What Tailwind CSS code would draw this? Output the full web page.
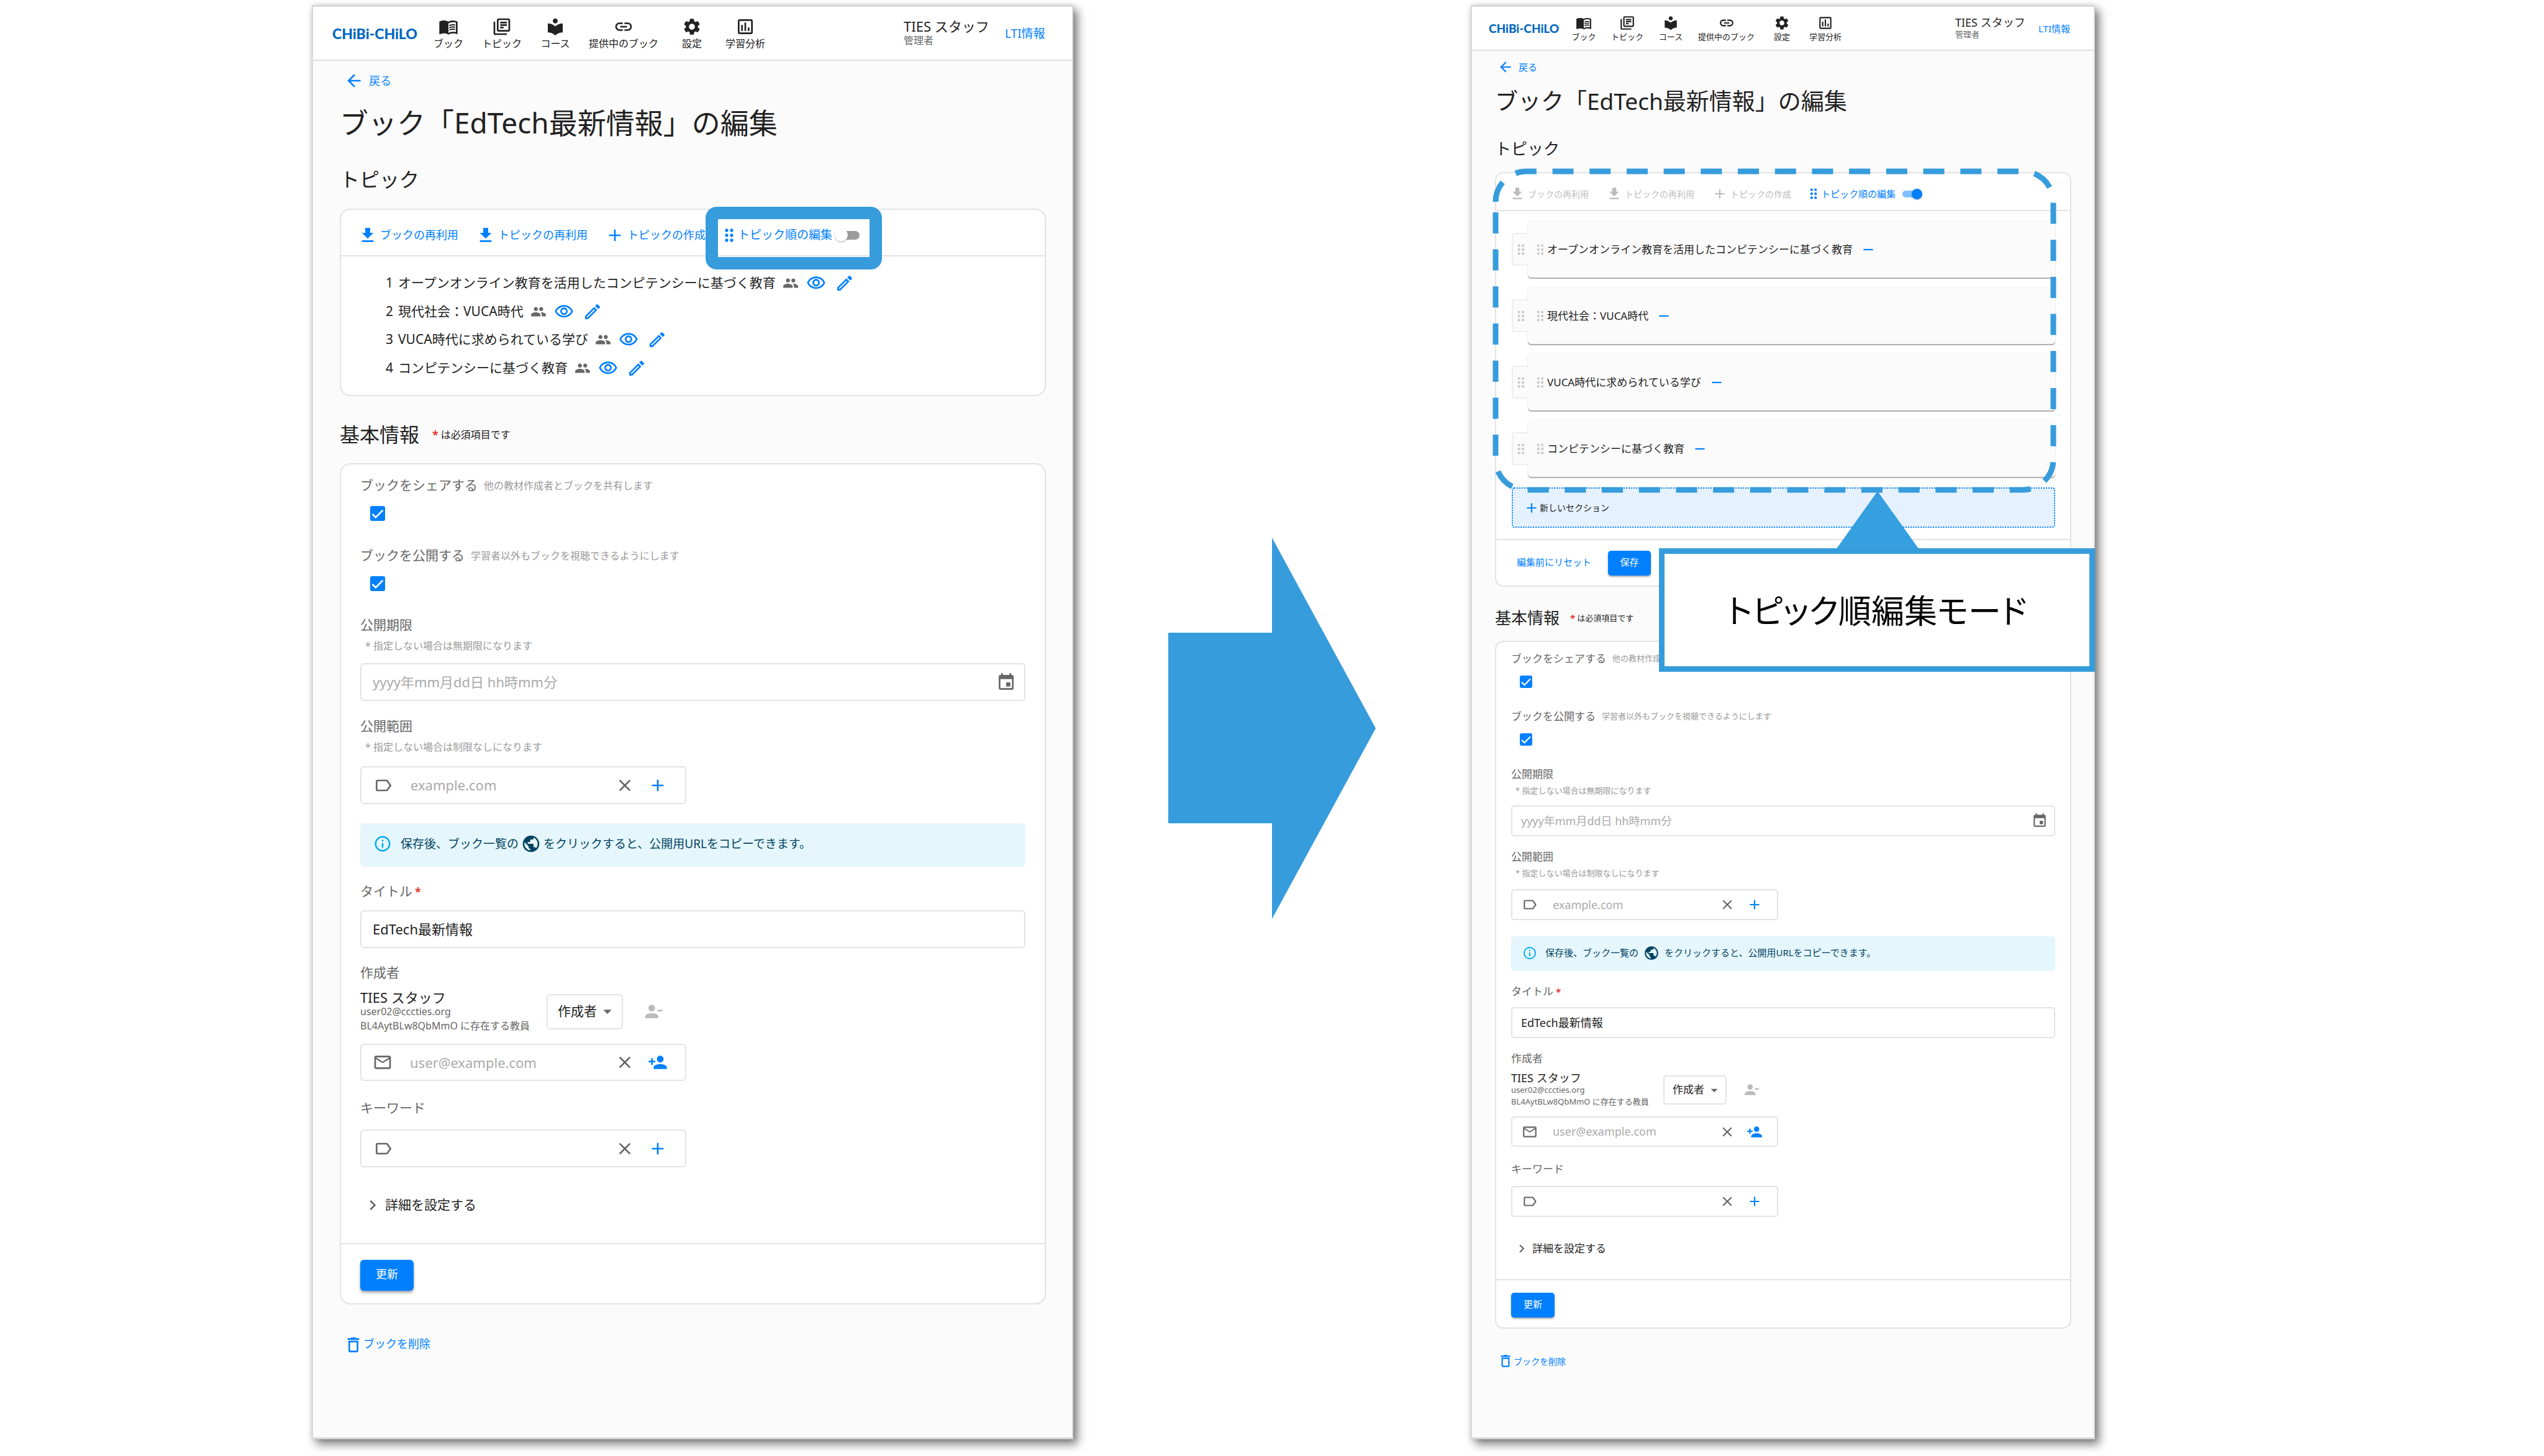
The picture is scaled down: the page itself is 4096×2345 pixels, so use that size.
<!DOCTYPE html>
<html lang="ja">
<head>
<meta charset="utf-8">
<title>ブックの編集 - トピック順編集モード</title>
<script src="https://cdn.jsdelivr.net/npm/@tailwindcss/browser@4"></script>
</head>
<body class="bg-white text-[#222] whitespace-nowrap font-['Noto_Sans','Noto_Sans_CJK_JP',sans-serif] [&_svg]:shrink-0 [&_svg]:fill-current">

<!-- shared icon set -->
<svg class="hidden" aria-hidden="true">
  <symbol id="book" viewBox="0 0 24 24"><path d="M21 5c-1.11-.35-2.33-.5-3.5-.5-1.95 0-4.05.4-5.5 1.5-1.45-1.1-3.55-1.5-5.5-1.5S2.45 4.9 1 6v14.65c0 .25.25.5.5.5.1 0 .15-.05.25-.05C3.1 20.45 5.05 20 6.5 20c1.95 0 4.05.4 5.5 1.5 1.35-.85 3.8-1.5 5.5-1.5 1.65 0 3.35.3 4.75 1.05.1.05.15.05.25.05.25 0 .5-.25.5-.5V6c-.6-.45-1.25-.75-2-1zm0 13.5c-1.1-.35-2.3-.5-3.5-.5-1.7 0-4.15.65-5.5 1.5V8c1.35-.85 3.8-1.5 5.5-1.5 1.2 0 2.4.15 3.5.5v11.5z"/><path d="M17.5 10.5c.88 0 1.73.09 2.5.26V9.24c-.79-.15-1.64-.24-2.5-.24-1.7 0-3.24.29-4.5.83v1.66c1.13-.64 2.7-.99 4.5-.99zM13 12.49v1.66c1.13-.64 2.7-.99 4.5-.99.88 0 1.73.09 2.5.26V11.9c-.79-.15-1.64-.24-2.5-.24-1.7 0-3.24.3-4.5.83zM17.5 14.33c-1.7 0-3.24.29-4.5.83v1.66c1.13-.64 2.7-.99 4.5-.99.88 0 1.73.09 2.5.26v-1.52c-.79-.16-1.64-.24-2.5-.24z"/></symbol>
  <symbol id="topics" viewBox="0 0 24 24"><path d="M4 6H2v14c0 1.1.9 2 2 2h14v-2H4V6zm16-4H8c-1.1 0-2 .9-2 2v12c0 1.1.9 2 2 2h12c1.1 0 2-.9 2-2V4c0-1.1-.9-2-2-2zm0 14H8V4h12v12zM10 9h8v2h-8zm0 3h4v2h-4zm0-6h8v2h-8z"/></symbol>
  <symbol id="course" viewBox="0 0 24 24"><path d="M12 11.55C9.64 9.35 6.48 8 3 8v11c3.48 0 6.64 1.35 9 3.55 2.36-2.19 5.52-3.55 9-3.55V8c-3.48 0-6.64 1.35-9 3.55zM12 8c1.66 0 3-1.34 3-3s-1.34-3-3-3-3 1.34-3 3 1.34 3 3 3z"/></symbol>
  <symbol id="link" viewBox="0 0 24 24"><path d="M3.9 12c0-1.71 1.39-3.1 3.1-3.1h4V7H7c-2.76 0-5 2.24-5 5s2.24 5 5 5h4v-1.9H7c-1.71 0-3.1-1.39-3.1-3.1zM8 13h8v-2H8v2zm9-6h-4v1.9h4c1.71 0 3.1 1.39 3.1 3.1s-1.39 3.1-3.1 3.1h-4V17h4c2.76 0 5-2.24 5-5s-2.24-5-5-5z"/></symbol>
  <symbol id="gear" viewBox="0 0 24 24"><path d="M19.14 12.94c.04-.3.06-.61.06-.94 0-.32-.02-.64-.07-.94l2.03-1.58c.18-.14.23-.41.12-.61l-1.92-3.32c-.12-.22-.37-.29-.59-.22l-2.39.96c-.5-.38-1.03-.7-1.62-.94l-.36-2.54c-.04-.24-.24-.41-.48-.41h-3.84c-.24 0-.43.17-.47.41l-.36 2.54c-.59.24-1.13.57-1.62.94l-2.39-.96c-.22-.08-.47 0-.59.22L2.74 8.87c-.12.21-.08.47.12.61l2.03 1.58c-.05.3-.09.63-.09.94s.02.64.07.94l-2.03 1.58c-.18.14-.23.41-.12.61l1.92 3.32c.12.22.37.29.59.22l2.39-.96c.5.38 1.03.7 1.62.94l.36 2.54c.05.24.24.41.48.41h3.84c.24 0 .44-.17.47-.41l.36-2.54c.59-.24 1.13-.56 1.62-.94l2.39.96c.22.08.47 0 .59-.22l1.92-3.32c.12-.22.07-.47-.12-.61l-2.01-1.58zM12 15.6c-1.98 0-3.6-1.62-3.6-3.6s1.62-3.6 3.6-3.6 3.6 1.62 3.6 3.6-1.62 3.6-3.6 3.6z"/></symbol>
  <symbol id="chart" viewBox="0 0 24 24"><path d="M19 3H5c-1.1 0-2 .9-2 2v14c0 1.1.9 2 2 2h14c1.1 0 2-.9 2-2V5c0-1.1-.9-2-2-2zm0 16H5V5h14v14zM7 10h2v7H7zM11 7h2v10h-2zM15 13h2v4h-2z"/></symbol>
  <symbol id="back" viewBox="0 0 24 24"><path d="M20 11H7.83l5.59-5.59L12 4l-8 8 8 8 1.41-1.41L7.83 13H20v-2z"/></symbol>
  <symbol id="download" viewBox="0 0 24 24"><path d="M19 9h-4V3H9v6H5l7 7 7-7zM5 18v2h14v-2H5z"/></symbol>
  <symbol id="add" viewBox="0 0 24 24"><path d="M19 13h-6v6h-2v-6H5v-2h6V5h2v6h6v2z"/></symbol>
  <symbol id="remove" viewBox="0 0 24 24"><path d="M19 13H5v-2h14v2z"/></symbol>
  <symbol id="close" viewBox="0 0 24 24"><path d="M19 6.41L17.59 5 12 10.59 6.41 5 5 6.41 10.59 12 5 17.59 6.41 19 12 13.41 17.59 19 19 17.59 13.41 12z"/></symbol>
  <symbol id="drag" viewBox="4.5 0 15 24"><path d="M11 18c0 1.1-.9 2-2 2s-2-.9-2-2 .9-2 2-2 2 .9 2 2zm-2-8c-1.1 0-2 .9-2 2s.9 2 2 2 2-.9 2-2-.9-2-2-2zm0-6c-1.1 0-2 .9-2 2s.9 2 2 2 2-.9 2-2-.9-2-2-2zm6 4c1.1 0 2-.9 2-2s-.9-2-2-2-2 .9-2 2 .9 2 2 2zm0 2c-1.1 0-2 .9-2 2s.9 2 2 2 2-.9 2-2-.9-2-2-2zm0 6c-1.1 0-2 .9-2 2s.9 2 2 2 2-.9 2-2-.9-2-2-2z"/></symbol>
  <symbol id="people" viewBox="0 0 24 24"><path d="M16 11c1.66 0 2.99-1.34 2.99-3S17.66 5 16 5c-1.66 0-3 1.34-3 3s1.34 3 3 3zm-8 0c1.66 0 2.99-1.34 2.99-3S9.66 5 8 5C6.34 5 5 6.34 5 8s1.34 3 3 3zm0 2c-2.33 0-7 1.17-7 3.5V19h14v-2.5c0-2.33-4.67-3.5-7-3.5zm8 0c-.29 0-.62.02-.97.05 1.16.84 1.97 1.97 1.97 3.45V19h6v-2.5c0-2.33-4.67-3.5-7-3.5z"/></symbol>
  <symbol id="eye" viewBox="0 0 24 24"><path d="M12 6c3.79 0 7.17 2.13 8.82 5.5C19.17 14.87 15.79 17 12 17s-7.17-2.13-8.82-5.5C4.83 8.13 8.21 6 12 6m0-2C7 4 2.73 7.11 1 11.5 2.73 15.89 7 19 12 19s9.27-3.11 11-7.5C21.27 7.11 17 4 12 4zm0 5c1.38 0 2.5 1.12 2.5 2.5S13.38 14 12 14s-2.5-1.12-2.5-2.5S10.62 9 12 9m0-2c-2.48 0-4.5 2.02-4.5 4.5S9.52 16 12 16s4.5-2.02 4.5-4.5S14.48 7 12 7z"/></symbol>
  <symbol id="edit" viewBox="0 0 24 24"><path d="M14.06 9.02l.92.92L5.92 19H5v-.92l9.06-9.06M17.66 3c-.25 0-.51.1-.7.29l-1.83 1.83 3.75 3.75 1.83-1.83c.39-.39.39-1.02 0-1.41l-2.34-2.34c-.2-.2-.45-.29-.71-.29zm-3.6 3.19L3 17.25V21h3.75L17.81 9.94l-3.75-3.75z"/></symbol>
  <symbol id="calendar" viewBox="0 0 24 24"><path d="M17 12h-5v5h5v-5zM16 1v2H8V1H6v2H5c-1.11 0-1.99.9-1.99 2L3 19c0 1.1.89 2 2 2h14c1.1 0 2-.9 2-2V5c0-1.1-.9-2-2-2h-1V1h-2zm3 18H5V8h14v11z"/></symbol>
  <symbol id="label" viewBox="0 0 24 24"><path d="M17.63 5.84C17.27 5.33 16.67 5 16 5L5 5.01C3.9 5.01 3 5.9 3 7v10c0 1.1.9 1.99 2 1.99L16 19c.67 0 1.27-.33 1.63-.84L22 12l-4.37-6.16zM16 17H5V7h11l3.55 5L16 17z"/></symbol>
  <symbol id="mail" viewBox="0 0 24 24"><path d="M20 4H4c-1.1 0-1.99.9-1.99 2L2 18c0 1.1.9 2 2 2h16c1.1 0 2-.9 2-2V6c0-1.1-.9-2-2-2zm0 14H4V8l8 5 8-5v10zm-8-7L4 6h16l-8 5z"/></symbol>
  <symbol id="person-add" viewBox="0 0 24 24"><path d="M15 12c2.21 0 4-1.79 4-4s-1.79-4-4-4-4 1.79-4 4 1.79 4 4 4zm-9-2V7H4v3H1v2h3v3h2v-3h3v-2H6zm9 4c-2.67 0-8 1.34-8 4v2h16v-2c0-2.66-5.33-4-8-4z"/></symbol>
  <symbol id="person-remove" viewBox="0 0 24 24"><path d="M14 8c0-2.21-1.79-4-4-4S6 5.79 6 8s1.79 4 4 4 4-1.79 4-4zm3 2v2h6v-2h-6zM2 18v2h16v-2c0-2.66-5.33-4-8-4s-8 1.34-8 4z"/></symbol>
  <symbol id="info" viewBox="0 0 24 24"><path d="M11,9H13V7H11M12,20C7.59,20 4,16.41 4,12C4,7.59 7.59,4 12,4C16.41,4 20,7.59 20,12C20,16.41 16.41,20 12,20M12,2A10,10 0 0,0 2,12A10,10 0 0,0 12,22A10,10 0 0,0 22,12A10,10 0 0,0 12,2M11,17H13V11H11V17Z"/></symbol>
  <symbol id="globe" viewBox="0 0 24 24"><path d="M12 2C6.48 2 2 6.48 2 12s4.48 10 10 10 10-4.48 10-10S17.52 2 12 2zm-1 17.93c-3.95-.49-7-3.85-7-7.93 0-.62.08-1.21.21-1.79L9 15v1c0 1.1.9 2 2 2v1.93zm6.9-2.54c-.26-.81-1-1.39-1.9-1.39h-1v-3c0-.55-.45-1-1-1H8v-2h2c.55 0 1-.45 1-1V7h2c1.1 0 2-.9 2-2v-.41c2.93 1.19 5 4.06 5 7.41 0 2.08-.8 3.97-2.1 5.39z"/></symbol>
  <symbol id="chevron" viewBox="0 0 24 24"><path d="M10 6L8.59 7.41 13.17 12l-4.58 4.59L10 18l6-6z"/></symbol>
  <symbol id="caret" viewBox="0 0 24 24"><path d="M7 10l5 5 5-5z"/></symbol>
  <symbol id="trash" viewBox="0 0 24 24"><path d="M6 19c0 1.1.9 2 2 2h8c1.1 0 2-.9 2-2V7H6v12zM8 9h8v10H8V9zm7.5-5l-1-1h-5l-1 1H5v2h14V4h-3.5z"/></symbol>
  <symbol id="tick" viewBox="0 0 18 18"><path fill="none" stroke="#fff" stroke-width="2" d="M2.7 9.7l4 4L15.3 5"/></symbol>
</svg>

<main class="grid grid-cols-[502fr_1226fr_640fr_1005fr_723fr] items-start">

  <!-- normal mode -->
  <section class="col-start-2 mt-2 mb-[27px] border-x-2 border-y-[3px] border-[#d9d9d9] bg-[#fbfbfb] shadow-[7px_8px_14px_rgba(0,0,0,0.5),0_0_8px_rgba(0,0,0,0.12)]">
    <header class="flex h-[87px] items-center border-b-2 border-[#e0e0e0] bg-white pl-[31px] pr-[42px]">
      <a href="#" class="w-[135px] text-[23px] leading-6 font-black text-[#0067c0] font-['Lato',sans-serif]">CHiBi-CHiLO</a>
      <nav class="ml-7 flex gap-[30px] text-[16px] leading-[22px]">
        <a href="#" class="flex min-w-12 flex-col items-center"><svg class="size-8"><use href="#book"/></svg>ブック</a>
        <a href="#" class="flex min-w-12 flex-col items-center"><svg class="size-8"><use href="#topics"/></svg>トピック</a>
        <a href="#" class="flex min-w-12 flex-col items-center"><svg class="size-8"><use href="#course"/></svg>コース</a>
        <a href="#" class="flex min-w-12 flex-col items-center"><svg class="size-8"><use href="#link"/></svg>提供中のブック</a>
        <a href="#" class="flex min-w-12 flex-col items-center"><svg class="size-8"><use href="#gear"/></svg>設定</a>
        <a href="#" class="flex min-w-12 flex-col items-center"><svg class="size-8"><use href="#chart"/></svg>学習分析</a>
      </nav>
      <div class="ml-auto w-[141px] pb-1">
        <p class="text-[22px] leading-[26px]">TIES スタッフ</p>
        <p class="text-[16px] leading-5 text-[#666]">管理者</p>
      </div>
      <a href="#" class="ml-[22px] w-[66px] text-[19px] leading-6 text-[#0080ff]">LTI情報</a>
    </header>

    <div class="pl-[43px] pr-[42px] pb-[133px]">
      <a href="#" class="ml-[7px] flex h-16 items-center gap-2 text-[18px] text-[#0080ff]"><svg class="size-8"><use href="#back"/></svg>戻る</a>
      <h1 class="flex h-[70px] items-center text-[46px] leading-[70px]">ブック「EdTech最新情報」の編集</h1>
      <h2 class="flex h-[104px] items-center pt-[10px] text-[32px]">トピック</h2>

      <div class="rounded-[17px] border-2 border-[#e3e3e3] bg-white">
        <div class="flex h-[75px] items-center gap-7 border-b-2 border-[#e3e3e3] pl-[27px] pt-2 text-[18px] text-[#0080ff]">
          <button class="flex items-center gap-1"><svg class="size-8"><use href="#download"/></svg>ブックの再利用</button>
          <button class="flex items-center gap-1"><svg class="size-8"><use href="#download"/></svg>トピックの再利用</button>
          <button class="flex items-center gap-1"><svg class="size-8"><use href="#add"/></svg>トピックの作成</button>
          <label class="relative flex h-8 items-center gap-1 text-[19px]">
            <svg class="h-8 w-5"><use href="#drag"/></svg>トピック順の編集
            <span class="relative flex h-[21px] w-10 items-center justify-end">
              <input type="checkbox" class="h-[14px] w-[30px] appearance-none rounded-full bg-[#9b9b9b]">
              <span class="absolute left-0 size-[21px] rounded-full bg-white shadow-[0_1px_2px_rgba(0,0,0,0.35)]"></span>
            </span>
            <span class="pointer-events-none absolute -left-7 -right-9 -top-[30px] -bottom-[39px] z-10 rounded-[18px] border-20 border-[#369cdc]"></span>
          </label>
        </div>
        <ol class="pl-[72px] pt-[20px] pb-[20px] text-[21px]">
          <li class="flex h-[46px] items-center"><span class="w-5">1</span>オープンオンライン教育を活用したコンピテンシーに基づく教育<svg class="ml-[11px] size-[26px] text-[#666]"><use href="#people"/></svg><button aria-label="表示" class="ml-3 text-[#0080ff]"><svg class="size-8"><use href="#eye"/></svg></button><button aria-label="編集" class="ml-[14px] text-[#0080ff]"><svg class="size-8"><use href="#edit"/></svg></button></li>
          <li class="flex h-[45px] items-center"><span class="w-5">2</span>現代社会：VUCA時代<svg class="ml-[11px] size-[26px] text-[#666]"><use href="#people"/></svg><button aria-label="表示" class="ml-3 text-[#0080ff]"><svg class="size-8"><use href="#eye"/></svg></button><button aria-label="編集" class="ml-[14px] text-[#0080ff]"><svg class="size-8"><use href="#edit"/></svg></button></li>
          <li class="flex h-[46px] items-center"><span class="w-5">3</span>VUCA時代に求められている学び<svg class="ml-[11px] size-[26px] text-[#666]"><use href="#people"/></svg><button aria-label="表示" class="ml-3 text-[#0080ff]"><svg class="size-8"><use href="#eye"/></svg></button><button aria-label="編集" class="ml-[14px] text-[#0080ff]"><svg class="size-8"><use href="#edit"/></svg></button></li>
          <li class="flex h-[46px] items-center"><span class="w-5">4</span>コンピテンシーに基づく教育<svg class="ml-[11px] size-[26px] text-[#666]"><use href="#people"/></svg><button aria-label="表示" class="ml-3 text-[#0080ff]"><svg class="size-8"><use href="#eye"/></svg></button><button aria-label="編集" class="ml-[14px] text-[#0080ff]"><svg class="size-8"><use href="#edit"/></svg></button></li>
        </ol>
      </div>

      <div class="flex h-[108px] items-center pt-4">
        <h2 class="text-[32px]">基本情報</h2>
        <p class="ml-[21px] flex items-center gap-1 text-[16px]"><span class="text-[18px] font-bold text-[#e53935]">*</span>は必須項目です</p>
      </div>

      <form class="rounded-[17px] border-2 border-[#e3e3e3] bg-white">
        <div class="border-b-2 border-[#e3e3e3] pl-[31px] pr-[31px] pt-[13px] pb-[45px] text-[21px] text-[#666]">
          <label for="a-share" class="flex h-[42px] items-center gap-[10px]">ブックをシェアする<span class="text-[16px] text-[#999]">他の教材作成者とブックを共有します</span></label>
          <div class="ml-4 flex h-12 items-center"><span class="relative size-6"><input id="a-share" type="checkbox" checked class="block size-6 appearance-none rounded-[3px] bg-[#0080ff]"><svg class="pointer-events-none absolute inset-0 size-6"><use href="#tick"/></svg></span></div>
          <label for="a-open" class="mt-[23px] flex h-[42px] items-center gap-[10px]">ブックを公開する<span class="text-[16px] text-[#999]">学習者以外もブックを視聴できるようにします</span></label>
          <div class="ml-4 flex h-12 items-center"><span class="relative size-6"><input id="a-open" type="checkbox" checked class="block size-6 appearance-none rounded-[3px] bg-[#0080ff]"><svg class="pointer-events-none absolute inset-0 size-6"><use href="#tick"/></svg></span></div>

          <label for="a-limit" class="mt-[27px] flex h-8 items-center">公開期限</label>
          <p class="flex h-[34px] items-center pl-2 text-[16px] text-[#999]">* 指定しない場合は無期限になります</p>
          <div class="mt-[11px] flex h-[61px] items-center rounded-[6px] border-2 border-[#e3e3e3] pl-[18px] pr-[13px] text-[22px]">
            <input id="a-limit" type="text" placeholder="yyyy年mm月dd日 hh時mm分" class="min-w-0 flex-1 outline-none placeholder:text-[#aaa]">
            <svg class="size-8"><use href="#calendar"/></svg>
          </div>

          <label for="a-range" class="mt-[25px] flex h-8 items-center">公開範囲</label>
          <p class="flex h-[34px] items-center pl-2 text-[16px] text-[#999]">* 指定しない場合は制限なしになります</p>
          <div class="mt-[14px] flex h-[61px] w-[525px] items-center rounded-[6px] border-2 border-[#e3e3e3] pl-[19px] pr-[28px] text-[22px]">
            <svg class="size-8"><use href="#label"/></svg>
            <input id="a-range" type="text" placeholder="example.com" class="ml-7 min-w-0 flex-1 outline-none placeholder:text-[#aaa]">
            <button type="button" aria-label="消去"><svg class="size-8"><use href="#close"/></svg></button>
            <button type="button" aria-label="追加" class="ml-[21px] text-[#0080ff]"><svg class="size-8"><use href="#add"/></svg></button>
          </div>

          <div class="mt-[31px] flex h-[70px] items-center rounded-[6px] bg-[#e5f6fd] pl-[21px] pb-1 text-[19px] text-[#014361]">
            <svg class="mr-[14px] size-[30px] text-[#03a9f4]"><use href="#info"/></svg>保存後、ブック一覧の<svg class="mx-1 size-8"><use href="#globe"/></svg>をクリックすると、公開用URLをコピーできます。
          </div>

          <label for="a-title" class="mt-6 flex h-8 items-center gap-1">タイトル<span class="text-[18px] font-bold text-[#e53935]">*</span></label>
          <div class="mt-[14px] flex h-[61px] items-center rounded-[6px] border-2 border-[#e3e3e3] px-[18px] text-[22px]">
            <input id="a-title" type="text" value="EdTech最新情報" class="min-w-0 flex-1 text-[#222] outline-none">
          </div>

          <label for="a-role" class="mt-6 flex h-8 items-center">作成者</label>
          <div class="mt-[11px] flex h-[70px] items-center">
            <div class="w-[278px] text-[16px] leading-[23px]">
              <p class="text-[22px] leading-6 text-[#222]">TIES スタッフ</p>
              <p>user02@cccties.org</p>
              <p>BL4AytBLw8QbMmO に存在する教員</p>
            </div>
            <div class="relative ml-[22px] h-[57px] w-[123px]">
              <select id="a-role" class="size-full appearance-none rounded-[6px] border-2 border-[#e3e3e3] bg-white pl-4 text-[21px] text-[#222]"><option>作成者</option></select>
              <svg class="pointer-events-none absolute right-[9px] top-3 size-8"><use href="#caret"/></svg>
            </div>
            <button type="button" aria-label="作成者を削除" class="ml-[33px] text-[#bbb]"><svg class="size-8"><use href="#person-remove"/></svg></button>
          </div>
          <div class="mt-[17px] flex h-[60px] w-[525px] items-center rounded-[6px] border-2 border-[#e3e3e3] pl-[18px] pr-[28px] text-[22px]">
            <svg class="size-8"><use href="#mail"/></svg>
            <input type="email" aria-label="メールアドレス" placeholder="user@example.com" class="ml-7 min-w-0 flex-1 outline-none placeholder:text-[#aaa]">
            <button type="button" aria-label="消去"><svg class="size-8"><use href="#close"/></svg></button>
            <button type="button" aria-label="作成者を追加" class="ml-[21px] text-[#0080ff]"><svg class="size-8"><use href="#person-add"/></svg></button>
          </div>

          <label for="a-key" class="mt-7 flex h-8 items-center">キーワード</label>
          <div class="mt-[18px] flex h-[61px] w-[525px] items-center rounded-[6px] border-2 border-[#e3e3e3] pl-[19px] pr-[28px] text-[22px]">
            <svg class="size-8"><use href="#label"/></svg>
            <input id="a-key" type="text" class="ml-7 min-w-0 flex-1 outline-none">
            <button type="button" aria-label="消去"><svg class="size-8"><use href="#close"/></svg></button>
            <button type="button" aria-label="追加" class="ml-[21px] text-[#0080ff]"><svg class="size-8"><use href="#add"/></svg></button>
          </div>
          <button type="button" class="ml-1 mt-[45px] flex h-8 items-center gap-1"><svg class="size-8"><use href="#chevron"/></svg><span class="text-[#222]">詳細を設定する</span></button>
        </div>
        <div class="pl-[31px] pt-[25px] pb-5">
          <button type="submit" class="h-[50px] w-[86px] rounded-[6px] bg-[#0080ff] pb-1 text-[18px] text-white shadow-[0_3px_4px_rgba(0,0,0,0.35)]">更新</button>
        </div>
      </form>
      <button class="ml-[6px] mt-[49px] flex h-8 items-center text-[18px] leading-8 text-[#0080ff]"><svg class="size-8"><use href="#trash"/></svg><span class="pb-1">ブックを削除</span></button>
    </div>
  </section>

  <!-- transition arrow -->
  <svg class="col-start-3 h-[614px] w-[334px] place-self-center text-[#369cdc]" viewBox="0 0 334 614"><path d="M0 153H167V0L334 307L167 614V460H0z"/></svg>

  <!-- topic order editing mode -->
  <section class="col-start-4 mt-2 mb-[27px] border-x-2 border-y-[3px] border-[#d9d9d9] bg-[#fbfbfb] shadow-[7px_8px_14px_rgba(0,0,0,0.5),0_0_8px_rgba(0,0,0,0.12)]">
    <header class="flex h-[71px] items-center border-b-2 border-[#e0e0e0] bg-white pl-[27px] pr-9">
      <a href="#" class="w-[110px] text-[19px] leading-5 font-black text-[#0067c0] font-['Lato',sans-serif]">CHiBi-CHiLO</a>
      <nav class="ml-[23px] flex gap-6 text-[13px] leading-[18px]">
        <a href="#" class="flex min-w-10 flex-col items-center"><svg class="size-[26px]"><use href="#book"/></svg>ブック</a>
        <a href="#" class="flex min-w-10 flex-col items-center"><svg class="size-[26px]"><use href="#topics"/></svg>トピック</a>
        <a href="#" class="flex min-w-10 flex-col items-center"><svg class="size-[26px]"><use href="#course"/></svg>コース</a>
        <a href="#" class="flex min-w-10 flex-col items-center"><svg class="size-[26px]"><use href="#link"/></svg>提供中のブック</a>
        <a href="#" class="flex min-w-10 flex-col items-center"><svg class="size-[26px]"><use href="#gear"/></svg>設定</a>
        <a href="#" class="flex min-w-10 flex-col items-center"><svg class="size-[26px]"><use href="#chart"/></svg>学習分析</a>
      </nav>
      <div class="ml-auto w-[115px] pb-[3px]">
        <p class="text-[18px] leading-[22px]">TIES スタッフ</p>
        <p class="text-[13px] leading-4 text-[#666]">管理者</p>
      </div>
      <a href="#" class="ml-[19px] w-[53px] text-[15px] leading-5 text-[#0080ff]">LTI情報</a>
    </header>

    <div class="pl-[37px] pr-9 pb-[110px]">
      <a href="#" class="ml-1 flex h-[52px] items-center gap-2 text-[15px] text-[#0080ff]"><svg class="size-[26px]"><use href="#back"/></svg>戻る</a>
      <h1 class="flex h-[58px] items-center text-[37px] leading-[58px]">ブック「EdTech最新情報」の編集</h1>
      <h2 class="flex h-[85px] items-center pt-[9px] text-[26px]">トピック</h2>

      <div class="relative rounded-[14px] border-2 border-[#e3e3e3] bg-white">
        <div class="flex h-[61px] items-center gap-7 border-b-2 border-[#e3e3e3] pl-[21px] pt-[7px] text-[14px] text-[#bdbdbd]">
          <button disabled class="flex items-center gap-1"><svg class="size-[26px]"><use href="#download"/></svg>ブックの再利用</button>
          <button disabled class="flex items-center gap-1"><svg class="size-[26px]"><use href="#download"/></svg>トピックの再利用</button>
          <button disabled class="flex items-center gap-1"><svg class="size-[26px]"><use href="#add"/></svg>トピックの作成</button>
          <label class="flex items-center gap-1 text-[15px] text-[#0080ff]">
            <svg class="h-[26px] w-4"><use href="#drag"/></svg>トピック順の編集
            <span class="relative ml-[7px] flex h-[17px] w-8 items-center">
              <input type="checkbox" checked class="h-[11px] w-7 appearance-none rounded-full bg-[#80bfff]">
              <span class="absolute right-0 size-[17px] rounded-full bg-[#0080ff] shadow-[0_1px_2px_rgba(0,0,0,0.35)]"></span>
            </span>
          </label>
        </div>

        <div class="border-b-2 border-[#e3e3e3] pl-[25px] pr-6 pt-4 pb-[18px] text-[17px]">
          <ul class="flex flex-col gap-4">
            <li class="flex h-[91px] items-center">
              <span class="z-1 -mr-[2px] flex h-[53px] w-7 items-center rounded-l-[4px] border-2 border-r-0 border-[#eee] bg-[#fbfbfb] pl-[5px] text-[#ccc]"><svg class="h-[26px] w-4"><use href="#drag"/></svg></span>
              <div class="flex h-full flex-1 items-center rounded-[5px] bg-[#fbfbfb] pl-3 shadow-[0_2px_1px_rgba(0,0,0,0.3),0_0_2px_rgba(0,0,0,0.15)]"><svg class="h-[26px] w-4 text-[#ccc]"><use href="#drag"/></svg><span class="ml-[3px]">オープンオンライン教育を活用したコンピテンシーに基づく教育</span><button aria-label="削除" class="ml-3 text-[#0080ff]"><svg class="size-[26px]"><use href="#remove"/></svg></button></div>
            </li>
            <li class="flex h-[91px] items-center">
              <span class="z-1 -mr-[2px] flex h-[53px] w-7 items-center rounded-l-[4px] border-2 border-r-0 border-[#eee] bg-[#fbfbfb] pl-[5px] text-[#ccc]"><svg class="h-[26px] w-4"><use href="#drag"/></svg></span>
              <div class="flex h-full flex-1 items-center rounded-[5px] bg-[#fbfbfb] pl-3 shadow-[0_2px_1px_rgba(0,0,0,0.3),0_0_2px_rgba(0,0,0,0.15)]"><svg class="h-[26px] w-4 text-[#ccc]"><use href="#drag"/></svg><span class="ml-[3px]">現代社会：VUCA時代</span><button aria-label="削除" class="ml-3 text-[#0080ff]"><svg class="size-[26px]"><use href="#remove"/></svg></button></div>
            </li>
            <li class="flex h-[91px] items-center">
              <span class="z-1 -mr-[2px] flex h-[53px] w-7 items-center rounded-l-[4px] border-2 border-r-0 border-[#eee] bg-[#fbfbfb] pl-[5px] text-[#ccc]"><svg class="h-[26px] w-4"><use href="#drag"/></svg></span>
              <div class="flex h-full flex-1 items-center rounded-[5px] bg-[#fbfbfb] pl-3 shadow-[0_2px_1px_rgba(0,0,0,0.3),0_0_2px_rgba(0,0,0,0.15)]"><svg class="h-[26px] w-4 text-[#ccc]"><use href="#drag"/></svg><span class="ml-[3px]">VUCA時代に求められている学び</span><button aria-label="削除" class="ml-3 text-[#0080ff]"><svg class="size-[26px]"><use href="#remove"/></svg></button></div>
            </li>
            <li class="flex h-[91px] items-center">
              <span class="z-1 -mr-[2px] flex h-[53px] w-7 items-center rounded-l-[4px] border-2 border-r-0 border-[#eee] bg-[#fbfbfb] pl-[5px] text-[#ccc]"><svg class="h-[26px] w-4"><use href="#drag"/></svg></span>
              <div class="flex h-full flex-1 items-center rounded-[5px] bg-[#fbfbfb] pl-3 shadow-[0_2px_1px_rgba(0,0,0,0.3),0_0_2px_rgba(0,0,0,0.15)]"><svg class="h-[26px] w-4 text-[#ccc]"><use href="#drag"/></svg><span class="ml-[3px]">コンピテンシーに基づく教育</span><button aria-label="削除" class="ml-3 text-[#0080ff]"><svg class="size-[26px]"><use href="#remove"/></svg></button></div>
            </li>
          </ul>
          <button class="mt-[17px] flex h-[65px] w-full items-center rounded-[4px] border-2 border-dotted border-[#0080ff] bg-[#e5f1fe] pl-[17px] text-[14px]"><svg class="size-[26px] text-[#0080ff]"><use href="#add"/></svg>新しいセクション</button>
        </div>
        <div class="flex pl-[33px] pt-[17px] pb-4 text-[15px]">
          <button class="w-[120px] pb-1 text-[#0080ff]">編集前にリセット</button>
          <button class="ml-[27px] h-10 w-[69px] rounded-[5px] bg-[#0080ff] pb-1 text-white shadow-[0_2px_3px_rgba(0,0,0,0.35)]">保存</button>
        </div>

        <!-- dashed frame round the sortable list -->
        <svg class="pointer-events-none absolute -left-[6px] -top-2 z-10 h-[523px] w-[908px] text-[#369cdc]" viewBox="0 0 908 523"><path fill="none" stroke="currentColor" stroke-width="9" stroke-dasharray="34 25.7" d="M5 54A49 49 0 0 1 54 5H854A49 49 0 0 1 903 54V469A49 49 0 0 1 854 518H54A49 49 0 0 1 5 469z"/></svg>
        <!-- callout -->
        <svg class="pointer-events-none absolute left-[547px] top-[512px] z-10 h-[94px] w-[134px] text-[#369fe0]" viewBox="0 0 134 94"><path d="M67 0L134 94H0z"/></svg>
        <p class="absolute left-[262px] -right-10 top-[604px] z-10 flex h-[199px] items-center justify-center border-9 border-[#369cdc] bg-white pb-1 text-[53px] leading-[70px] text-black font-['Noto_Sans_CJK_JP',sans-serif] [font-feature-settings:'palt']">トピック順編集モード</p>
      </div>

      <div class="flex h-[87px] items-center pt-[14px]">
        <h2 class="text-[26px]">基本情報</h2>
        <p class="ml-[17px] flex items-center gap-[3px] text-[13px]"><span class="text-[15px] font-bold text-[#e53935]">*</span>は必須項目です</p>
      </div>

      <form class="rounded-[14px] border-2 border-[#e3e3e3] bg-white">
        <div class="border-b-2 border-[#e3e3e3] pl-6 pr-6 pt-[10px] pb-9 text-[17px] text-[#666]">
          <label for="b-share" class="flex h-[34px] items-center gap-[10px]">ブックをシェアする<span class="text-[13px] text-[#999]">他の教材作成者とブックを共有します</span></label>
          <div class="ml-[14px] flex h-10 items-center"><span class="relative size-5"><input id="b-share" type="checkbox" checked class="block size-5 appearance-none rounded-[3px] bg-[#0080ff]"><svg class="pointer-events-none absolute inset-0 size-5"><use href="#tick"/></svg></span></div>
          <label for="b-open" class="mt-[19px] flex h-[34px] items-center gap-[10px]">ブックを公開する<span class="text-[13px] text-[#999]">学習者以外もブックを視聴できるようにします</span></label>
          <div class="ml-[14px] flex h-10 items-center"><span class="relative size-5"><input id="b-open" type="checkbox" checked class="block size-5 appearance-none rounded-[3px] bg-[#0080ff]"><svg class="pointer-events-none absolute inset-0 size-5"><use href="#tick"/></svg></span></div>

          <label for="b-limit" class="mt-[23px] flex h-[26px] items-center">公開期限</label>
          <p class="flex h-[27px] items-center pl-[7px] text-[13px] text-[#999]">* 指定しない場合は無期限になります</p>
          <div class="mt-[10px] flex h-[50px] items-center rounded-[5px] border-2 border-[#e3e3e3] pl-[14px] pr-[10px] text-[18px]">
            <input id="b-limit" type="text" placeholder="yyyy年mm月dd日 hh時mm分" class="min-w-0 flex-1 outline-none placeholder:text-[#aaa]">
            <svg class="size-[26px]"><use href="#calendar"/></svg>
          </div>

          <label for="b-range" class="mt-5 flex h-[26px] items-center">公開範囲</label>
          <p class="flex h-[27px] items-center pl-[7px] text-[13px] text-[#999]">* 指定しない場合は制限なしになります</p>
          <div class="mt-3 flex h-[50px] w-[430px] items-center rounded-[5px] border-2 border-[#e3e3e3] pl-[15px] pr-[23px] text-[18px]">
            <svg class="size-[26px]"><use href="#label"/></svg>
            <input id="b-range" type="text" placeholder="example.com" class="ml-6 min-w-0 flex-1 outline-none placeholder:text-[#aaa]">
            <button type="button" aria-label="消去"><svg class="size-[26px]"><use href="#close"/></svg></button>
            <button type="button" aria-label="追加" class="ml-[18px] text-[#0080ff]"><svg class="size-[26px]"><use href="#add"/></svg></button>
          </div>

          <div class="mt-[26px] flex h-14 items-center rounded-[5px] bg-[#e5f6fd] pl-[18px] pb-[3px] text-[15px] text-[#014361]">
            <svg class="mr-[13px] size-6 text-[#03a9f4]"><use href="#info"/></svg>保存後、ブック一覧の<svg class="mx-2 size-[26px]"><use href="#globe"/></svg>をクリックすると、公開用URLをコピーできます。
          </div>

          <label for="b-title" class="mt-5 flex h-[26px] items-center gap-1">タイトル<span class="text-[15px] font-bold text-[#e53935]">*</span></label>
          <div class="mt-3 flex h-[50px] items-center rounded-[5px] border-2 border-[#e3e3e3] px-[14px] text-[18px]">
            <input id="b-title" type="text" value="EdTech最新情報" class="min-w-0 flex-1 text-[#222] outline-none">
          </div>

          <label for="b-role" class="mt-5 flex h-[26px] items-center">作成者</label>
          <div class="mt-2 flex h-[58px] items-center">
            <div class="w-[228px] text-[13px] leading-[19px]">
              <p class="text-[18px] leading-5 text-[#222]">TIES スタッフ</p>
              <p>user02@cccties.org</p>
              <p>BL4AytBLw8QbMmO に存在する教員</p>
            </div>
            <div class="relative ml-[17px] h-[47px] w-[102px]">
              <select id="b-role" class="size-full appearance-none rounded-[5px] border-2 border-[#e3e3e3] bg-white pl-[13px] text-[17px] text-[#222]"><option>作成者</option></select>
              <svg class="pointer-events-none absolute right-[7px] top-[11px] size-[26px]"><use href="#caret"/></svg>
            </div>
            <button type="button" aria-label="作成者を削除" class="ml-[27px] text-[#bbb]"><svg class="size-[26px]"><use href="#person-remove"/></svg></button>
          </div>
          <div class="mt-[14px] flex h-[49px] w-[430px] items-center rounded-[5px] border-2 border-[#e3e3e3] pl-[15px] pr-[23px] text-[18px]">
            <svg class="size-[26px]"><use href="#mail"/></svg>
            <input type="email" aria-label="メールアドレス" placeholder="user@example.com" class="ml-6 min-w-0 flex-1 outline-none placeholder:text-[#aaa]">
            <button type="button" aria-label="消去"><svg class="size-[26px]"><use href="#close"/></svg></button>
            <button type="button" aria-label="作成者を追加" class="ml-[18px] text-[#0080ff]"><svg class="size-[26px]"><use href="#person-add"/></svg></button>
          </div>

          <label for="b-key" class="mt-[23px] flex h-[26px] items-center">キーワード</label>
          <div class="mt-[14px] flex h-[50px] w-[430px] items-center rounded-[5px] border-2 border-[#e3e3e3] pl-[15px] pr-[23px] text-[18px]">
            <svg class="size-[26px]"><use href="#label"/></svg>
            <input id="b-key" type="text" class="ml-6 min-w-0 flex-1 outline-none">
            <button type="button" aria-label="消去"><svg class="size-[26px]"><use href="#close"/></svg></button>
            <button type="button" aria-label="追加" class="ml-[18px] text-[#0080ff]"><svg class="size-[26px]"><use href="#add"/></svg></button>
          </div>
          <button type="button" class="ml-1 mt-[38px] flex h-[26px] items-center gap-1"><svg class="size-[26px]"><use href="#chevron"/></svg><span class="text-[#222]">詳細を設定する</span></button>
        </div>
        <div class="pl-6 pt-5 pb-4">
          <button type="submit" class="h-10 w-[70px] rounded-[5px] bg-[#0080ff] pb-1 text-[15px] text-white shadow-[0_2px_3px_rgba(0,0,0,0.35)]">更新</button>
        </div>
      </form>
      <button class="ml-1 mt-[39px] flex h-[26px] items-center text-[14px] text-[#0080ff]"><svg class="size-[26px]"><use href="#trash"/></svg>ブックを削除</button>
    </div>
  </section>
</main>
</body>
</html>
